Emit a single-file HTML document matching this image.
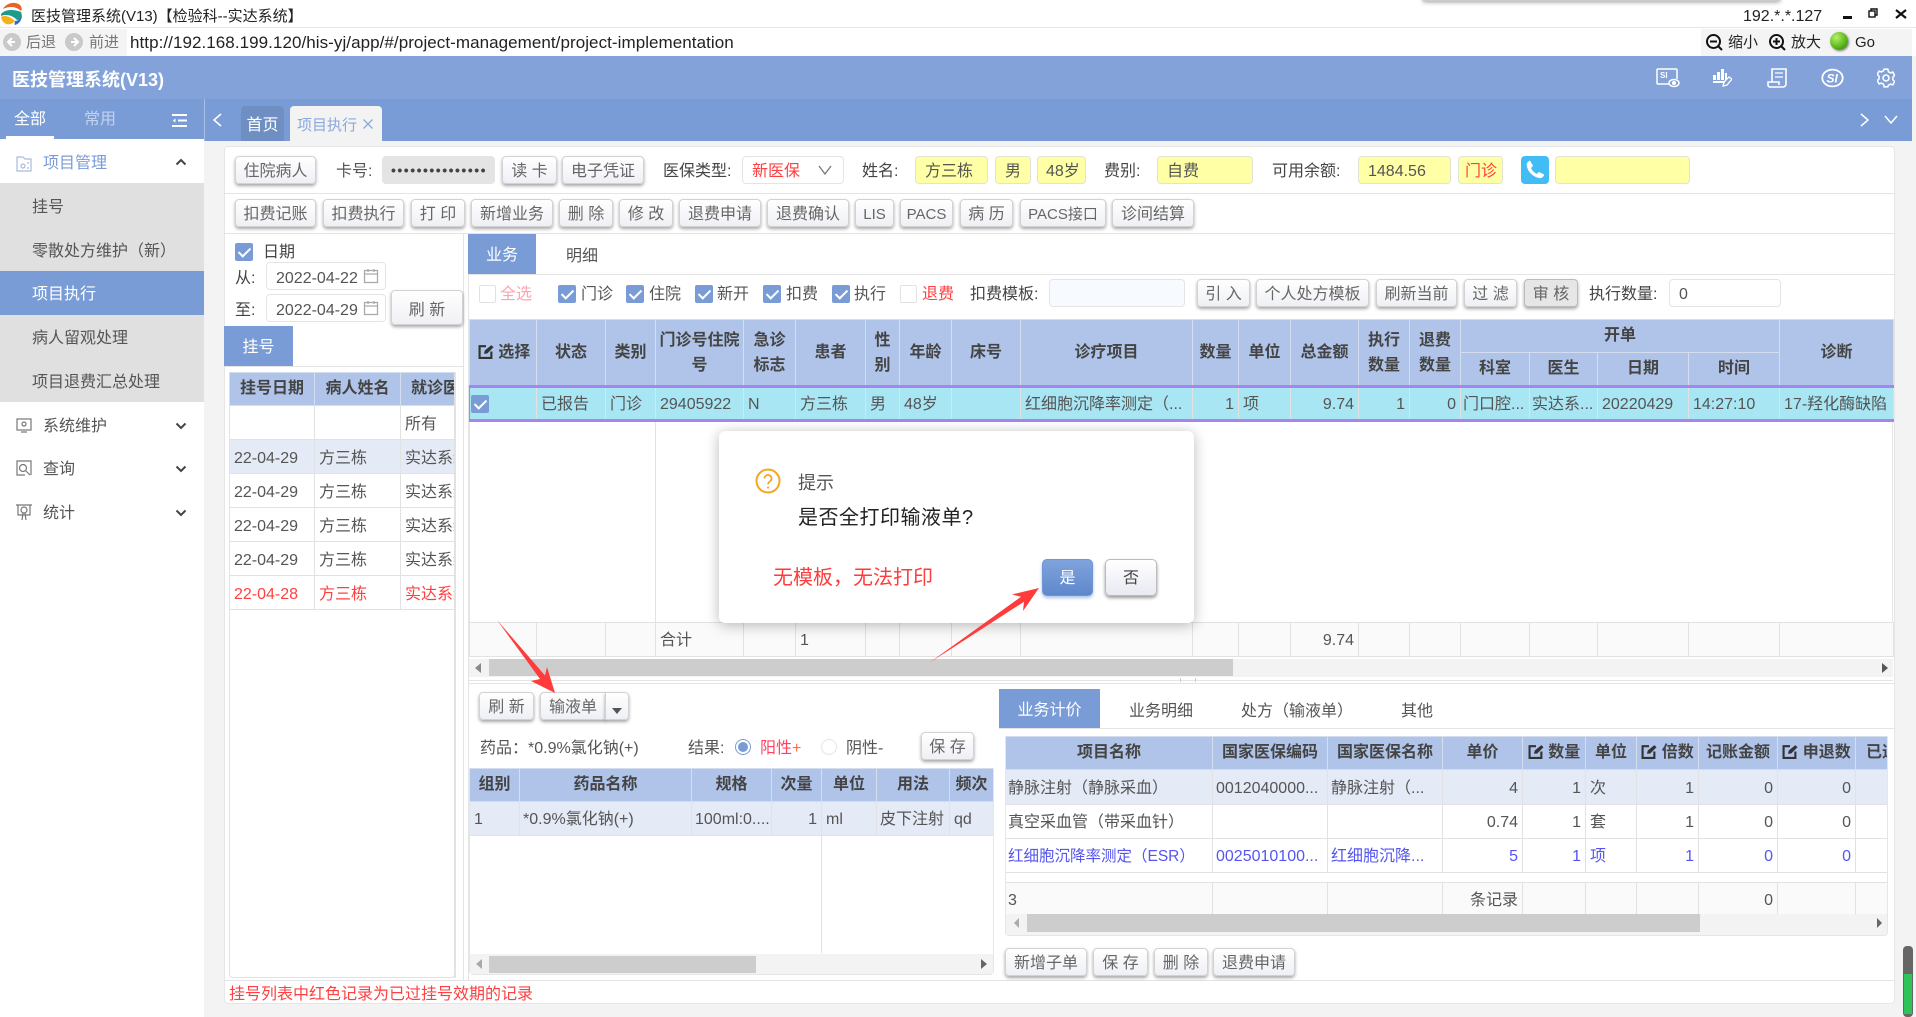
<!DOCTYPE html>
<html lang="zh-CN"><head><meta charset="utf-8"><title>医技管理系统(V13)</title>
<style>
*{box-sizing:border-box}
html,body{margin:0;padding:0;width:1916px;height:1017px;overflow:hidden;background:#f3f3f3}
body{position:relative;font-family:"Liberation Sans","Noto Sans CJK SC",sans-serif;font-size:16px;color:#555}
.a{position:absolute}
.t{position:absolute;white-space:nowrap;line-height:24px;height:20px}
.b{position:absolute;height:28px;line-height:29px;text-align:center;background:linear-gradient(#fff,#eff0f5);border:1px solid #d2d2d2;border-radius:4px;box-shadow:0 2px 3px rgba(0,0,0,.35);color:#666;font-size:16px;white-space:nowrap}
.y{position:absolute;top:156px;height:28px;line-height:29px;background:#ffffa6;border:1px solid #e3e3d2;border-radius:4px;padding-left:9px;color:#555;white-space:nowrap}
.cb{position:absolute;width:18px;height:18px;background:#7a9cd6;border-radius:2px}
.cb:after{content:"";position:absolute;left:6px;top:2px;width:5px;height:10px;border:solid #fff;border-width:0 2px 2px 0;transform:rotate(45deg)}
.cu{position:absolute;width:17px;height:18px;background:#fff;border:1px solid #e2e2e2;border-radius:2px}
.in{position:absolute;background:#fff;border:1px solid #e4e4e4;border-radius:4px;line-height:29px;color:#555;padding-left:9px;white-space:nowrap}
table{position:absolute;border-collapse:collapse;table-layout:fixed;font-size:16px;color:#555}
td,th{padding:0 4px;overflow:hidden;white-space:nowrap;border:1px solid #e2e2e2;line-height:20px}
td{padding-top:3px}
.lt td{padding-top:5px}
th{background:#afc4e8;color:#444;font-weight:bold;border-color:#d5deef;text-align:center}
th.w{white-space:normal;line-height:25px}
.r{text-align:right}
.sb{position:absolute;background:#cdcdcd}
.tri{position:absolute;width:0;height:0;border-style:solid;border-color:transparent}
.m{position:absolute;left:32px;color:#555;line-height:24px;white-space:nowrap}
.ic{position:absolute;left:16px}
.ch{position:absolute;left:175px}
</style></head><body>

<!-- title bar -->
<div class="a" style="left:0;top:0;width:1916px;height:28px;background:#fff;border-bottom:1px solid #e6e6e6"></div>
<div class="a" style="left:1423px;top:-8px;width:357px;height:9px;background:#ccc;box-shadow:0 1px 5px rgba(0,0,0,.4)"></div>
<svg class="a" style="left:0;top:2px" width="23" height="24" viewBox="0 0 23 24"><circle cx="11" cy="12" r="11" fill="#fff"/><path d="M3 7C6 1 15-1 20 3 22 5 22 8 21 9 16 4 9 4 3 7Z" fill="#e8632a"/><path d="M1 12C5 7 14 7 21 10 23 14 20 18 17 18 12 13 6 12 1 14Z" fill="#1d9c8d"/><path d="M1 15C4 13 10 14 15 19 11 24 3 24 1 15Z" fill="#f3b21d"/><path d="M15 19C18 19 20 17 22 13 22 18 19 22 15 23 14 22 15 20 15 19Z" fill="#2c6ec9"/></svg>
<div class="t" style="left:31px;top:5px;font-size:15px;color:#222">医技管理系统(V13)【检验科--实达系统】</div>
<div class="t" style="left:1743px;top:5px;font-size:16px;color:#222">192.*.*.127</div>
<div class="a" style="left:1843px;top:16px;width:9px;height:3px;background:#111"></div>
<svg class="a" style="left:1868px;top:8px" width="10" height="10" viewBox="0 0 10 10" fill="none" stroke="#111" stroke-width="1.4"><rect x="1" y="3" width="6" height="6"/><path d="M3 3V1h6v6H7"/></svg>
<svg class="a" style="left:1895px;top:9px" width="12" height="10" viewBox="0 0 12 10" stroke="#111" stroke-width="2.2"><path d="M1 1l10 8M11 1L1 9"/></svg>

<!-- address bar -->
<div class="a" style="left:0;top:28px;width:1916px;height:28px;background:#fff"></div>
<div class="a" style="left:0;top:29px;width:127px;height:27px;background:#f4f4f4"></div>
<div class="a" style="left:1701px;top:29px;width:211px;height:27px;background:#f4f4f4"></div>
<svg class="a" style="left:2px;top:31px" width="20" height="22" viewBox="0 0 20 22"><circle cx="10" cy="11" r="9" fill="#c9c9c9"/><path d="M13 11H7M10 7l-4 4 4 4" fill="none" stroke="#fff" stroke-width="2"/></svg>
<div class="t" style="left:26px;top:31px;font-size:15px;color:#777">后退</div>
<svg class="a" style="left:64px;top:31px" width="20" height="22" viewBox="0 0 20 22"><circle cx="10" cy="11" r="9" fill="#c9c9c9"/><path d="M7 11h6M10 7l4 4-4 4" fill="none" stroke="#fff" stroke-width="2"/></svg>
<div class="t" style="left:89px;top:31px;font-size:15px;color:#777">前进</div>
<div class="t" style="left:130px;top:31px;font-size:17px;letter-spacing:.06px;color:#222">http://192.168.199.120/his-yj/app/#/project-management/project-implementation</div>
<svg class="a" style="left:1705px;top:33px" width="19" height="19" viewBox="0 0 19 19" fill="none" stroke="#111" stroke-width="2"><circle cx="8.5" cy="8.5" r="6.5"/><path d="M13 13l4 4M5 8.5h7"/></svg>
<div class="t" style="left:1728px;top:31px;font-size:15px;color:#222">缩小</div>
<svg class="a" style="left:1768px;top:33px" width="19" height="19" viewBox="0 0 19 19" fill="none" stroke="#111" stroke-width="2"><circle cx="8.5" cy="8.5" r="6.5"/><path d="M13 13l4 4M5 8.5h7M8.5 5v7"/></svg>
<div class="t" style="left:1791px;top:31px;font-size:15px;color:#222">放大</div>
<div class="a" style="left:1830px;top:32px;width:18px;height:18px;border-radius:50%;background:radial-gradient(circle at 35% 30%,#b6f06a,#4fae12 65%,#2f7a08);box-shadow:1px 1px 2px rgba(0,0,0,.5)"></div>
<div class="t" style="left:1855px;top:31px;font-size:15px;color:#222">Go</div>

<!-- header -->
<div class="a" style="left:0;top:56px;width:1912px;height:43px;background:#82a2d9"></div>
<div class="t" style="left:12px;top:68px;font-size:18px;font-weight:bold;color:#fff">医技管理系统(V13)</div>
<svg class="a" style="left:1656px;top:68px" width="24" height="20" viewBox="0 0 24 20" fill="none" stroke="#fff" stroke-width="1.5"><path d="M13 16H2a1 1 0 0 1-1-1V2a1 1 0 0 1 1-1h18a1 1 0 0 1 1 1v9"/><ellipse cx="18" cy="15" rx="5" ry="3.5"/><circle cx="18" cy="15" r="1.3" fill="#fff"/><text x="4" y="10" fill="#fff" stroke="none" font-size="8" font-weight="bold" font-family="Liberation Sans">SI</text></svg>
<svg class="a" style="left:1712px;top:68px" width="20" height="20" viewBox="0 0 20 20" fill="#fff"><rect x="1" y="7" width="3" height="5"/><rect x="5" y="4" width="3" height="8"/><rect x="9" y="1" width="3" height="11"/><rect x="13" y="5" width="2" height="7"/><rect x="1" y="13" width="12" height="2"/><path d="M11 18l1-4 5-5 3 2-5 6z" fill="none" stroke="#fff" stroke-width="1.3"/></svg>
<svg class="a" style="left:1767px;top:68px" width="21" height="20" viewBox="0 0 21 20" fill="none" stroke="#fff" stroke-width="1.6"><path d="M5 14V1h14v15a3 3 0 0 1-3 3H3a2 2 0 0 1-2-2v-3h11v3"/><path d="M8 5h8M8 9h8" stroke-width="1.3"/></svg>
<svg class="a" style="left:1821px;top:68px" width="23" height="20" viewBox="0 0 23 20" fill="none" stroke="#fff" stroke-width="1.8"><ellipse cx="11.5" cy="10" rx="10.2" ry="8.4"/><text x="5.5" y="14.5" fill="#fff" stroke="none" font-size="12" font-style="italic" font-weight="bold" font-family="Liberation Sans">SI</text></svg>
<svg class="a" style="left:1877px;top:68px" width="18" height="20" viewBox="0 0 18 20" fill="none" stroke="#fff" stroke-width="1.6"><path d="M7 1h4l.6 2.6 2.2 1.2 2.5-.8 2 3.4-2 1.8v2.6l2 1.8-2 3.4-2.5-.8-2.2 1.2L11 19H7l-.6-2.6-2.2-1.2-2.5.8-2-3.4 2-1.8V8.2l-2-1.8 2-3.4 2.5.8 2.2-1.2z" transform="translate(.5 .2) scale(.94 .98)"/><circle cx="9" cy="10" r="3"/></svg>

<!-- tabs row -->
<div class="a" style="left:0;top:99px;width:1912px;height:42px;background:#7a9cd6"></div>
<div class="a" style="left:204px;top:99px;width:1px;height:42px;background:#a9bfe4"></div>
<div class="t" style="left:14px;top:108px;color:#fff">全部</div>
<div class="t" style="left:84px;top:108px;color:#c3d2ee">常用</div>
<div class="a" style="left:6px;top:136px;width:48px;height:3px;background:#fff"></div>
<svg class="a" style="left:172px;top:113px" width="15" height="15" viewBox="0 0 15 15" stroke="#fff" stroke-width="2" fill="#fff"><path d="M0 2h15M6 7.5h9M0 13h15"/><path d="M3.500 5.500L0.800 7.500l2.700 2z" stroke="none"/></svg>
<svg class="a" style="left:212px;top:112px" width="11" height="16" viewBox="0 0 11 16" fill="none" stroke="#fff" stroke-width="1.5"><path d="M9 2L2 8l7 6"/></svg>
<div class="a" style="left:241px;top:106px;width:43px;height:35px;background:#6f8fc2;border-radius:4px 4px 0 0;color:#fff;text-align:center;line-height:39px">首页</div>
<div class="a" style="left:290px;top:106px;width:92px;height:35px;background:#f3f3f3;border-radius:4px 4px 0 0;color:#8aa8dc;font-size:15px;line-height:39px;padding-left:7px;overflow:hidden">项目执行</div>
<svg class="a" style="left:363px;top:119px" width="10" height="10" viewBox="0 0 10 10" stroke="#8aa8dc" stroke-width="1.3"><path d="M.5.5l9 9M9.500.5l-9 9"/></svg>
<svg class="a" style="left:1859px;top:112px" width="11" height="16" viewBox="0 0 11 16" fill="none" stroke="#fff" stroke-width="1.5"><path d="M2 2l7 6-7 6"/></svg>
<svg class="a" style="left:1884px;top:115px" width="14" height="10" viewBox="0 0 14 10" fill="none" stroke="#fff" stroke-width="1.5"><path d="M1 1l6 7 6-7"/></svg>

<!-- sidebar -->
<div class="a" style="left:0;top:139px;width:204px;height:878px;background:#fff">
  <svg class="ic" style="top:17px" width="16" height="16" viewBox="0 0 16 16" fill="none" stroke="#a9bbdc" stroke-width="1.2"><path d="M1 15V1h6l2 2h6v12z"/><circle cx="7" cy="10" r="2"/><path d="M12 6v2M12 11v2"/></svg>
  <div class="m" style="left:43px;top:13px;color:#7a9cd6">项目管理</div>
  <svg class="ch" style="top:19px" width="12" height="8" viewBox="0 0 12 8" fill="none" stroke="#444" stroke-width="2"><path d="M1.500 6.500L6 2l4.500 4.500"/></svg>
  <div class="a" style="left:0;top:44px;width:204px;height:219px;background:#e0e0e0"></div>
  <div class="m" style="top:57px">挂号</div>
  <div class="m" style="top:101px">零散处方维护（新）</div>
  <div class="a" style="left:0;top:132px;width:204px;height:44px;background:#7a9cd6"></div>
  <div class="m" style="top:144px;color:#fff">项目执行</div>
  <div class="m" style="top:188px">病人留观处理</div>
  <div class="m" style="top:232px">项目退费汇总处理</div>
  <svg class="ic" style="top:278px" width="16" height="16" viewBox="0 0 16 16" fill="none" stroke="#777" stroke-width="1.2"><rect x="1" y="2" width="14" height="11"/><circle cx="8" cy="7" r="2"/><path d="M5 15h6"/></svg>
  <div class="m" style="left:43px;top:276px">系统维护</div>
  <svg class="ch" style="top:283px" width="12" height="8" viewBox="0 0 12 8" fill="none" stroke="#444" stroke-width="2"><path d="M1.500 1.500L6 6l4.500-4.500"/></svg>
  <svg class="ic" style="top:321px" width="16" height="16" viewBox="0 0 16 16" fill="none" stroke="#777" stroke-width="1.2"><path d="M9 15H1V1h14v14"/><circle cx="7" cy="8" r="3.500"/><path d="M10 11l4 4"/></svg>
  <div class="m" style="left:43px;top:319px">查询</div>
  <svg class="ch" style="top:326px" width="12" height="8" viewBox="0 0 12 8" fill="none" stroke="#444" stroke-width="2"><path d="M1.500 1.500L6 6l4.500-4.500"/></svg>
  <svg class="ic" style="top:365px" width="16" height="17" viewBox="0 0 16 17" fill="none" stroke="#777" stroke-width="1.2"><path d="M0 1h16M2 1v10h12V1"/><circle cx="8" cy="6" r="3"/><path d="M6 16l1-7M10 16L9 9"/></svg>
  <div class="m" style="left:43px;top:363px">统计</div>
  <svg class="ch" style="top:370px" width="12" height="8" viewBox="0 0 12 8" fill="none" stroke="#444" stroke-width="2"><path d="M1.500 1.500L6 6l4.500-4.500"/></svg>
</div>

<!-- main card -->
<div class="a" style="left:224px;top:146px;width:1671px;height:858px;background:#fff;border:1px solid #e6e6e6;border-radius:4px"></div>
<div class="a" style="left:224px;top:193px;width:1671px;height:1px;background:#e4e4e4"></div>
<div class="a" style="left:224px;top:233px;width:1671px;height:1px;background:#e4e4e4"></div>
<div class="a" style="left:224px;top:980px;width:1671px;height:1px;background:#e4e4e4"></div>
<div class="a" style="left:463px;top:234px;width:1px;height:746px;background:#e4e4e4"></div>
<div class="a" style="left:468px;top:234px;width:1px;height:746px;background:#e4e4e4"></div>

<!-- row 1 -->
<div class="b" style="left:235px;top:156px;width:81px">住院病人</div>
<div class="t" style="left:336px;top:160px;color:#555">卡号:</div>
<div class="a" style="left:382px;top:156px;width:113px;height:28px;background:#e4e4e4;border-radius:4px;color:#444;line-height:28px;padding-left:9px;font-size:14px;font-weight:bold;letter-spacing:1.500px;overflow:hidden;white-space:nowrap">•••••••••••••••</div>
<div class="b" style="left:502px;top:156px;width:55px">读 卡</div>
<div class="b" style="left:562px;top:156px;width:82px">电子凭证</div>
<div class="t" style="left:663px;top:160px;color:#444">医保类型:</div>
<div class="in" style="left:742px;top:156px;width:102px;height:28px;color:#ff4040">新医保</div>
<svg class="a" style="left:818px;top:165px" width="14" height="10" viewBox="0 0 14 10" fill="none" stroke="#777" stroke-width="1.3"><path d="M1 1l6 8 6-8"/></svg>
<div class="t" style="left:862px;top:160px;color:#444">姓名:</div>
<div class="y" style="left:915px;width:73px">方三栋</div>
<div class="y" style="left:995px;width:36px">男</div>
<div class="y" style="left:1037px;width:49px;padding-left:8px">48岁</div>
<div class="t" style="left:1104px;top:160px;color:#444">费别:</div>
<div class="y" style="left:1157px;width:96px">自费</div>
<div class="t" style="left:1272px;top:160px;color:#444">可用余额:</div>
<div class="y" style="left:1358px;width:93px">1484.56</div>
<div class="y" style="left:1458px;width:45px;color:#ff4040;padding-left:6px">门诊</div>
<div class="a" style="left:1521px;top:156px;width:28px;height:28px;background:#42bcf5;border-radius:4px"></div>
<svg class="a" style="left:1525px;top:160px" width="20" height="20" viewBox="0 0 24 24" fill="#fff"><path d="M6.600 1.500l3 5.500-2.300 2.600c1.200 3 3.800 5.700 7 7l2.500-2.300 5.700 3c.5.300.5.900.2 1.400-1 1.800-3 3.300-5 3-8.500-1.200-15-8-15.700-16C1.800 3.700 3.700 1.800 5.400 1c.5-.2 1-.1 1.200.5z"/></svg>
<div class="y" style="left:1555px;width:135px"></div>

<!-- row 2 -->
<div class="b" style="left:235px;top:199px;width:81px">扣费记账</div>
<div class="b" style="left:323px;top:199px;width:81px">扣费执行</div>
<div class="b" style="left:411px;top:199px;width:54px">打 印</div>
<div class="b" style="left:471px;top:199px;width:82px">新增业务</div>
<div class="b" style="left:559px;top:199px;width:54px">删 除</div>
<div class="b" style="left:619px;top:199px;width:54px">修 改</div>
<div class="b" style="left:679px;top:199px;width:82px">退费申请</div>
<div class="b" style="left:767px;top:199px;width:82px">退费确认</div>
<div class="b" style="left:855px;top:199px;width:39px;font-size:15px">LIS</div>
<div class="b" style="left:900px;top:199px;width:53px;font-size:15px">PACS</div>
<div class="b" style="left:960px;top:199px;width:53px">病 历</div>
<div class="b" style="left:1020px;top:199px;width:86px;font-size:15px">PACS接口</div>
<div class="b" style="left:1112px;top:199px;width:82px">诊间结算</div>

<!-- left panel -->
<div class="cb" style="left:235px;top:243px"></div>
<div class="t" style="left:263px;top:241px;color:#444">日期</div>
<div class="t" style="left:235px;top:267px;color:#444">从:</div>
<div class="in" style="left:266px;top:262px;width:120px;height:28px;line-height:31px">2022-04-22</div>
<svg class="a" style="left:363px;top:268px" width="16" height="16" viewBox="0 0 16 16" fill="none" stroke="#aaa" stroke-width="1.3"><rect x="1.500" y="2.500" width="13" height="12"/><path d="M1.500 6h13M5 1v3M11 1v3"/></svg>
<div class="t" style="left:235px;top:299px;color:#444">至:</div>
<div class="in" style="left:266px;top:294px;width:120px;height:28px;line-height:31px">2022-04-29</div>
<svg class="a" style="left:363px;top:300px" width="16" height="16" viewBox="0 0 16 16" fill="none" stroke="#aaa" stroke-width="1.3"><rect x="1.500" y="2.500" width="13" height="12"/><path d="M1.500 6h13M5 1v3M11 1v3"/></svg>
<div class="b" style="left:391px;top:290px;width:72px;height:35px;line-height:39px">刷 新</div>
<div class="a" style="left:224px;top:326px;width:69px;height:40px;background:#7a9cd6;color:#fff;text-align:center;line-height:44px">挂号</div>
<div class="a" style="left:224px;top:366px;width:239px;height:1px;background:#e4e4e4"></div>
<div class="a" style="left:229px;top:372px;width:226px;height:606px;border:1px solid #e2e2e2;border-top:none;border-radius:4px"></div>
<div class="a" style="left:229px;top:372px;width:227px;height:238px;overflow:hidden">
<table class="lt" style="left:0;top:0;width:250px">
<colgroup><col style="width:85px"><col style="width:86px"><col style="width:79px"></colgroup>
<tr style="height:33px"><th>挂号日期</th><th>病人姓名</th><th style="text-align:left;padding-left:10px">就诊医生</th></tr>
<tr style="height:34px"><td></td><td></td><td>所有</td></tr>
<tr style="height:34px;background:#e4eaf6"><td>22-04-29</td><td>方三栋</td><td>实达系统</td></tr>
<tr style="height:34px"><td>22-04-29</td><td>方三栋</td><td>实达系统</td></tr>
<tr style="height:34px"><td>22-04-29</td><td>方三栋</td><td>实达系统</td></tr>
<tr style="height:34px"><td>22-04-29</td><td>方三栋</td><td>实达系统</td></tr>
<tr style="height:34px;color:#ff4040"><td>22-04-28</td><td>方三栋</td><td>实达系统</td></tr>
</table>
</div>
<div class="a" style="left:454px;top:372px;width:2px;height:606px;background:#e2e2e2"></div>
<div class="t" style="left:229px;top:983px;color:#ff4040">挂号列表中红色记录为已过挂号效期的记录</div>

<!-- right tabs -->
<div class="a" style="left:468px;top:234px;width:68px;height:40px;background:#7a9cd6;color:#fff;text-align:center;line-height:44px">业务</div>
<div class="t" style="left:566px;top:245px;color:#555">明细</div>
<div class="a" style="left:468px;top:274px;width:1427px;height:1px;background:#e4e4e4"></div>

<!-- filter row -->
<div class="cu" style="left:479px;top:285px"></div>
<div class="t" style="left:500px;top:283px;color:#ffa3b4">全选</div>
<div class="cb" style="left:558px;top:285px"></div><div class="t" style="left:581px;top:283px">门诊</div>
<div class="cb" style="left:626px;top:285px"></div><div class="t" style="left:649px;top:283px">住院</div>
<div class="cb" style="left:695px;top:285px"></div><div class="t" style="left:717px;top:283px">新开</div>
<div class="cb" style="left:763px;top:285px"></div><div class="t" style="left:786px;top:283px">扣费</div>
<div class="cb" style="left:832px;top:285px"></div><div class="t" style="left:854px;top:283px">执行</div>
<div class="cu" style="left:900px;top:285px"></div><div class="t" style="left:922px;top:283px;color:#ff4040">退费</div>
<div class="t" style="left:970px;top:283px;color:#444">扣费模板:</div>
<div class="in" style="left:1049px;top:279px;width:136px;height:28px;background:#f7faff"></div>
<div class="b" style="left:1197px;top:279px;width:53px">引 入</div>
<div class="b" style="left:1256px;top:279px;width:113px">个人处方模板</div>
<div class="b" style="left:1376px;top:279px;width:81px">刷新当前</div>
<div class="b" style="left:1464px;top:279px;width:53px">过 滤</div>
<div class="b" style="left:1524px;top:279px;width:54px;background:#e6e6e6;border-color:#bbb">审 核</div>
<div class="t" style="left:1589px;top:283px;color:#444">执行数量:</div>
<div class="in" style="left:1669px;top:279px;width:112px;height:28px">0</div>

<!-- main table -->
<div class="a" style="left:469px;top:319px;width:1424px;height:303px;border:1px solid #e6e6e6;border-top:none;border-bottom:none"></div>
<div class="a" style="left:655px;top:420px;width:1px;height:202px;background:#e2e2e2"></div>
<table style="left:469px;top:319px;width:1424px">
<colgroup><col style="width:67px"><col style="width:69px"><col style="width:50px"><col style="width:88px"><col style="width:52px"><col style="width:70px"><col style="width:34px"><col style="width:52px"><col style="width:69px"><col style="width:172px"><col style="width:46px"><col style="width:52px"><col style="width:68px"><col style="width:51px"><col style="width:51px"><col style="width:69px"><col style="width:68px"><col style="width:91px"><col style="width:91px"><col style="width:114px"></colgroup>
<tr style="height:33px">
<th rowspan="2" style="padding:0 0 0 2px"><svg width="16" height="15" viewBox="0 0 14 14" style="vertical-align:-2px"><path d="M12 7v6H1V2h6" fill="none" stroke="#333" stroke-width="2"/><path d="M5 9l1-3 6-5 2 2-6 6z" fill="#333"/></svg> 选择</th>
<th rowspan="2">状态</th><th rowspan="2">类别</th><th rowspan="2" class="w" style="padding:0">门诊号住院号</th><th rowspan="2" class="w">急诊标志</th><th rowspan="2">患者</th><th rowspan="2" class="w">性别</th><th rowspan="2">年龄</th><th rowspan="2">床号</th><th rowspan="2">诊疗项目</th><th rowspan="2">数量</th><th rowspan="2">单位</th><th rowspan="2" style="padding:0">总金额</th><th rowspan="2" class="w">执行数量</th><th rowspan="2" class="w">退费数量</th><th colspan="4">开单</th><th rowspan="2">诊断</th></tr>
<tr style="height:34px"><th>科室</th><th>医生</th><th>日期</th><th>时间</th></tr>
<tr style="height:34px;background:#a8e6f4;border-top:3px solid #a586f0;border-bottom:3px solid #a586f0"><td style="border-color:#a586f0 #e2e2e2 #a586f0 #a586f0"></td><td>已报告</td><td>门诊</td><td>29405922</td><td>N</td><td>方三栋</td><td>男</td><td>48岁</td><td></td><td>红细胞沉降率测定（...</td><td class="r">1</td><td>项</td><td class="r">9.74</td><td class="r">1</td><td class="r">0</td><td style="padding-left:2px;padding-right:2px">门口腔...</td><td style="padding-left:2px;padding-right:2px">实达系...</td><td>20220429</td><td>14:27:10</td><td>17-羟化酶缺陷</td></tr>
</table>
<div class="cb" style="left:471px;top:395px;background:#7a9cd6"></div>
<table style="left:469px;top:622px;width:1424px;background:#fafafa">
<colgroup><col style="width:67px"><col style="width:69px"><col style="width:50px"><col style="width:88px"><col style="width:52px"><col style="width:70px"><col style="width:34px"><col style="width:52px"><col style="width:69px"><col style="width:172px"><col style="width:46px"><col style="width:52px"><col style="width:68px"><col style="width:51px"><col style="width:51px"><col style="width:69px"><col style="width:68px"><col style="width:91px"><col style="width:91px"><col style="width:114px"></colgroup>
<tr style="height:34px"><td></td><td></td><td></td><td>合计</td><td></td><td>1</td><td></td><td></td><td></td><td></td><td></td><td></td><td class="r">9.74</td><td></td><td></td><td></td><td></td><td></td><td></td><td></td></tr>
</table>
<div class="a" style="left:469px;top:659px;width:1424px;height:18px;background:#f3f3f3"></div>
<div class="sb" style="left:489px;top:659px;width:744px;height:17px"></div>
<div class="tri" style="left:475px;top:663px;border-width:5px 6px 5px 0;border-right-color:#888"></div>
<div class="tri" style="left:1882px;top:663px;border-width:5px 0 5px 6px;border-left-color:#555"></div>
<div class="a" style="left:469px;top:680px;width:1424px;height:1px;background:#e4e4e4"></div>
<div class="a" style="left:469px;top:683px;width:1426px;height:1px;background:#e4e4e4"></div>
<div class="a" style="left:1180px;top:678px;width:16px;height:4px;border-left:1px solid #ccc;border-right:1px solid #ccc"></div>

<!-- bottom-left panel -->
<div class="b" style="left:479px;top:692px;width:55px">刷 新</div>
<div class="b" style="left:540px;top:692px;width:66px;border-radius:4px 0 0 4px">输液单</div>
<div class="b" style="left:605px;top:692px;width:24px;border-radius:0 4px 4px 0"></div>
<div class="tri" style="left:612px;top:708px;border-width:6px 5.500px 0 5.500px;border-top-color:#555"></div>
<div class="t" style="left:480px;top:737px;color:#555">药品：*0.9%氯化钠(+)</div>
<div class="t" style="left:688px;top:737px;color:#555">结果:</div>
<div class="a" style="left:735px;top:739px;width:16px;height:16px;border-radius:50%;border:1px solid #7a9cd6;background:#fff"></div>
<div class="a" style="left:738px;top:742px;width:10px;height:10px;border-radius:50%;background:#7a9cd6"></div>
<div class="t" style="left:760px;top:737px;color:#ff4060">阳性<span style="color:#ff6b3d">+</span></div>
<div class="a" style="left:821px;top:739px;width:16px;height:16px;border-radius:50%;border:1px solid #e4e4e4;background:#fff"></div>
<div class="t" style="left:846px;top:737px">阴性-</div>
<div class="b" style="left:921px;top:732px;width:53px">保 存</div>

<table style="left:469px;top:768px;width:524px">
<colgroup><col style="width:50px"><col style="width:172px"><col style="width:80px"><col style="width:50px"><col style="width:55px"><col style="width:73px"><col style="width:44px"></colgroup>
<tr style="height:33px"><th>组别</th><th>药品名称</th><th>规格</th><th>次量</th><th>单位</th><th>用法</th><th>频次</th></tr>
<tr style="height:34px;background:#e4eaf6"><td>1</td><td style="padding-left:3px">*0.9%氯化钠(+)</td><td style="padding-left:3px;padding-right:3px">100ml:0....</td><td class="r">1</td><td>ml</td><td style="padding-left:3px;padding-right:3px">皮下注射</td><td>qd</td></tr>
</table>
<div class="a" style="left:469px;top:768px;width:525px;height:207px;border:1px solid #e6e6e6;border-top:none;border-radius:0 0 4px 4px"></div>
<div class="a" style="left:821px;top:835px;width:1px;height:118px;background:#e2e2e2"></div>
<div class="a" style="left:470px;top:954px;width:523px;height:20px;background:#f3f3f3"></div>
<div class="sb" style="left:489px;top:956px;width:267px;height:17px"></div>
<div class="tri" style="left:476px;top:959px;border-width:5px 6px 5px 0;border-right-color:#aaa"></div>
<div class="tri" style="left:981px;top:959px;border-width:5px 0 5px 6px;border-left-color:#666"></div>

<!-- bottom-right panel -->
<div class="a" style="left:999px;top:689px;width:101px;height:40px;background:#7a9cd6;color:#fff;text-align:center;line-height:44px">业务计价</div>
<div class="t" style="left:1129px;top:700px">业务明细</div>
<div class="t" style="left:1241px;top:700px">处方（输液单）</div>
<div class="t" style="left:1401px;top:700px">其他</div>
<div class="a" style="left:999px;top:728px;width:896px;height:1px;background:#e4e4e4"></div>
<div class="a" style="left:1005px;top:736px;width:883px;height:200px;overflow:hidden;border:1px solid #e6e6e6;border-top:none;border-radius:0 0 4px 4px">
<table style="left:-1px;top:0;width:960px">
<colgroup><col style="width:207px"><col style="width:115px"><col style="width:115px"><col style="width:80px"><col style="width:63px"><col style="width:51px"><col style="width:62px"><col style="width:79px"><col style="width:78px"><col style="width:110px"></colgroup>
<tr style="height:33px"><th>项目名称</th><th style="padding:0">国家医保编码</th><th style="padding:0">国家医保名称</th><th>单价</th><th style="padding:0"><svg width="16" height="15" viewBox="0 0 14 14" style="vertical-align:-2px"><path d="M12 7v6H1V2h6" fill="none" stroke="#333" stroke-width="2"/><path d="M5 9l1-3 6-5 2 2-6 6z" fill="#333"/></svg> 数量</th><th>单位</th><th style="padding:0"><svg width="16" height="15" viewBox="0 0 14 14" style="vertical-align:-2px"><path d="M12 7v6H1V2h6" fill="none" stroke="#333" stroke-width="2"/><path d="M5 9l1-3 6-5 2 2-6 6z" fill="#333"/></svg> 倍数</th><th style="padding:0">记账金额</th><th style="padding:0"><svg width="16" height="15" viewBox="0 0 14 14" style="vertical-align:-2px"><path d="M12 7v6H1V2h6" fill="none" stroke="#333" stroke-width="2"/><path d="M5 9l1-3 6-5 2 2-6 6z" fill="#333"/></svg> 申退数</th><th style="text-align:left;padding-left:10px">已退数量</th></tr>
<tr style="height:35px;background:#e4eaf6"><td style="padding-left:2px;padding-right:2px">静脉注射（静脉采血）</td><td style="padding-left:3px;padding-right:3px">0012040000...</td><td style="padding-left:3px;padding-right:3px">静脉注射（...</td><td class="r">4</td><td class="r">1</td><td>次</td><td class="r">1</td><td class="r">0</td><td class="r">0</td><td></td></tr>
<tr style="height:34px"><td style="padding-left:2px;padding-right:2px">真空采血管（带采血针）</td><td></td><td></td><td class="r">0.74</td><td class="r">1</td><td>套</td><td class="r">1</td><td class="r">0</td><td class="r">0</td><td></td></tr>
<tr style="height:34px;color:#5555f0"><td style="padding-left:2px;padding-right:2px;font-size:15.500px">红细胞沉降率测定（ESR）</td><td style="padding-left:3px;padding-right:3px">0025010100...</td><td style="padding-left:3px;padding-right:3px">红细胞沉降...</td><td class="r">5</td><td class="r">1</td><td>项</td><td class="r">1</td><td class="r">0</td><td class="r">0</td><td></td></tr>
<tr style="height:10px"><td style="padding:0;height:10px" colspan="10"></td></tr>
<tr style="height:33px;background:#fafafa"><td style="padding-left:2px;padding-right:2px">3</td><td></td><td></td><td class="r">条记录</td><td></td><td></td><td></td><td class="r">0</td><td></td><td></td></tr>
</table>
<div class="a" style="left:0;top:178px;width:881px;height:21px;background:#f3f3f3"></div>
<div class="sb" style="left:21px;top:178px;width:673px;height:18px"></div>
<div class="tri" style="left:8px;top:182px;border-width:5px 5px 5px 0;border-right-color:#aaa"></div>
<div class="tri" style="left:871px;top:182px;border-width:5px 0 5px 5px;border-left-color:#666"></div>
</div>
<div class="b" style="left:1005px;top:948px;width:82px">新增子单</div>
<div class="b" style="left:1093px;top:948px;width:55px">保 存</div>
<div class="b" style="left:1154px;top:948px;width:54px">删 除</div>
<div class="b" style="left:1213px;top:948px;width:82px">退费申请</div>

<!-- page scrollbar thumb -->
<div class="a" style="left:1903px;top:946px;width:10px;height:71px;background:#666;border-radius:4px"></div>
<div class="a" style="left:1904px;top:974px;width:8px;height:40px;background:repeating-linear-gradient(#2fc35a 0 3px,#66a077 3px 4px)"></div>

<!-- dialog -->
<div class="a" style="left:719px;top:431px;width:475px;height:192px;background:#fff;border-radius:6px;box-shadow:0 2px 14px rgba(0,0,0,.28)"></div>
<svg class="a" style="left:755px;top:468px" width="26" height="26" viewBox="0 0 26 26" fill="none"><circle cx="13" cy="13" r="11.500" stroke="#f5a623" stroke-width="2"/><path d="M9.500 10.500a3.500 3.500 0 1 1 5.500 2.800c-1.300.9-2 1.500-2 3" stroke="#f5a623" stroke-width="1.700"/><circle cx="13" cy="19.500" r="1.100" fill="#f5a623"/></svg>
<div class="t" style="left:798px;top:471px;font-size:18px;color:#555">提示</div>
<div class="t" style="left:798px;top:506px;font-size:20px;letter-spacing:.5px;color:#222">是否全打印输液单?</div>
<div class="t" style="left:773px;top:566px;font-size:20px;color:#ff3b3b">无模板，无法打印</div>
<div class="a" style="left:1042px;top:559px;width:51px;height:37px;background:linear-gradient(#7fa3dc,#5f88cc);border:1px solid #6f95d2;border-radius:5px;color:#fff;text-align:center;line-height:38px;box-shadow:0 2px 3px rgba(90,130,200,.5)">是</div>
<div class="a" style="left:1105px;top:559px;width:52px;height:37px;background:linear-gradient(#fff,#e8eaf2);border:1px solid #bbb;border-radius:5px;color:#444;text-align:center;line-height:38px;box-shadow:0 2px 3px rgba(0,0,0,.4)">否</div>

<!-- annotation arrows -->
<svg class="a" style="left:0;top:0;pointer-events:none" width="1916" height="1017"><polygon points="497,620 545,675.500 547,667 555,693 531,681 540,679" fill="#ff3b3b"/><polygon points="929,663 1024,601.800 1023,611 1039,588 1012,594.400 1021,596.800" fill="#ff3b3b"/></svg>
</body></html>
